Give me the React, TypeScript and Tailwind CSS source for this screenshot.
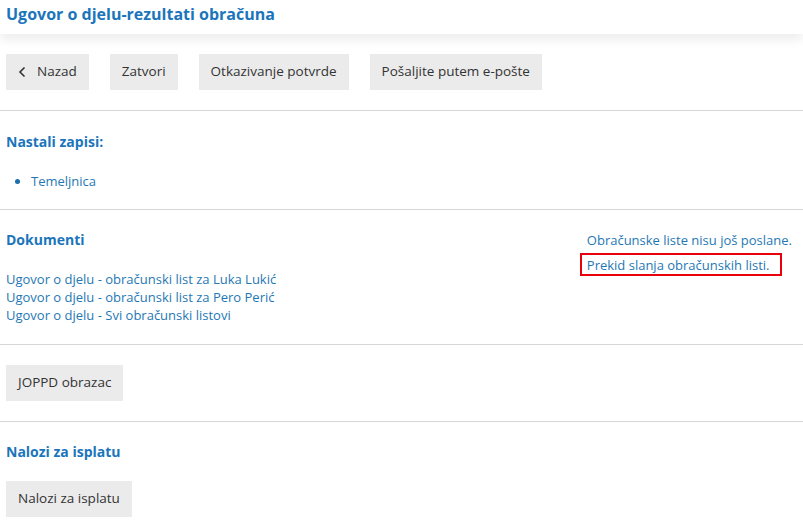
import React from "react";

const Btn = ({ children, gap }: { children: React.ReactNode; gap?: boolean }) => (
  <button className={"h-9 px-3 bg-[#ebebeb] text-[13.5px] text-[#333] flex items-center leading-none " + (gap ? "gap-[8px]" : "")}>
    {children}
  </button>
);

export default function App() {
  return (
    <div className="w-[803px] min-h-[527px] bg-white font-['Open_Sans',sans-serif] text-[13px]">
      <div className="h-[34px] px-[6px] pt-[4px] flex items-start shadow-[0_6px_10px_rgba(0,0,0,0.07)] relative">
        <h1 className="text-[16px] font-bold text-[#1b75bb] leading-[20px]">
          Ugovor o djelu-rezultati obračuna
        </h1>
      </div>
      <div className="px-[6px] pt-[20px] pb-[20px] flex gap-[21px]">
        <Btn gap>
          <svg width="12" height="14" viewBox="0 0 12 14" className="-ml-px">
            <path d="M7.5 2.5 L3 7 L7.5 11.5" fill="none" stroke="#333" strokeWidth="1.6" />
          </svg>
          Nazad
        </Btn>
        <Btn>Zatvori</Btn>
        <Btn>Otkazivanje potvrde</Btn>
        <Btn>Pošaljite putem e-pošte</Btn>
      </div>
      <div className="h-px bg-[#d6d6d6]" />
      <div className="px-[6px] pt-[21px] pb-[19px]">
        <h2 className="text-[14px] font-bold text-[#1b75bb] leading-5">Nastali zapisi:</h2>
        <ul className="mt-[20px] pl-[25px] list-disc text-[#1f78b4] marker:text-[#1b6fae] leading-[18px]">
          <li>Temeljnica</li>
        </ul>
      </div>
      <div className="h-px bg-[#d6d6d6]" />
      <div className="pl-[6px] pr-[11px] pt-[20px] pb-[20px] flex justify-between">
        <div>
          <h2 className="text-[14px] font-bold text-[#1b75bb] leading-5">Dokumenti</h2>
          <div className="mt-[20px] flex flex-col text-[#1f78b4] leading-[18px]">
            <span>Ugovor o djelu - obračunski list za Luka Lukić</span>
            <span>Ugovor o djelu - obračunski list za Pero Perić</span>
            <span>Ugovor o djelu - Svi obračunski listovi</span>
          </div>
        </div>
        <div className="flex flex-col items-start text-[#1f78b4] leading-5 pt-0">
          <span>Obračunske liste nisu još poslane.</span>
          <span className="relative mt-[5px]">
            Prekid slanja obračunskih listi.
            <span className="absolute -left-[7px] -right-[13px] -top-[2px] -bottom-[1px] border-2 border-[#e8000b]" />
          </span>
        </div>
      </div>
      <div className="h-px bg-[#d6d6d6]" />
      <div className="px-[6px] pt-[20px] pb-[20px] flex">
        <Btn>JOPPD obrazac</Btn>
      </div>
      <div className="h-px bg-[#d6d6d6]" />
      <div className="px-[6px] pt-[20px] pb-[10px]">
        <h2 className="text-[14px] font-bold text-[#1b75bb] leading-5">Nalozi za isplatu</h2>
        <div className="mt-[19px] flex">
          <Btn>Nalozi za isplatu</Btn>
        </div>
      </div>
    </div>
  );
}
